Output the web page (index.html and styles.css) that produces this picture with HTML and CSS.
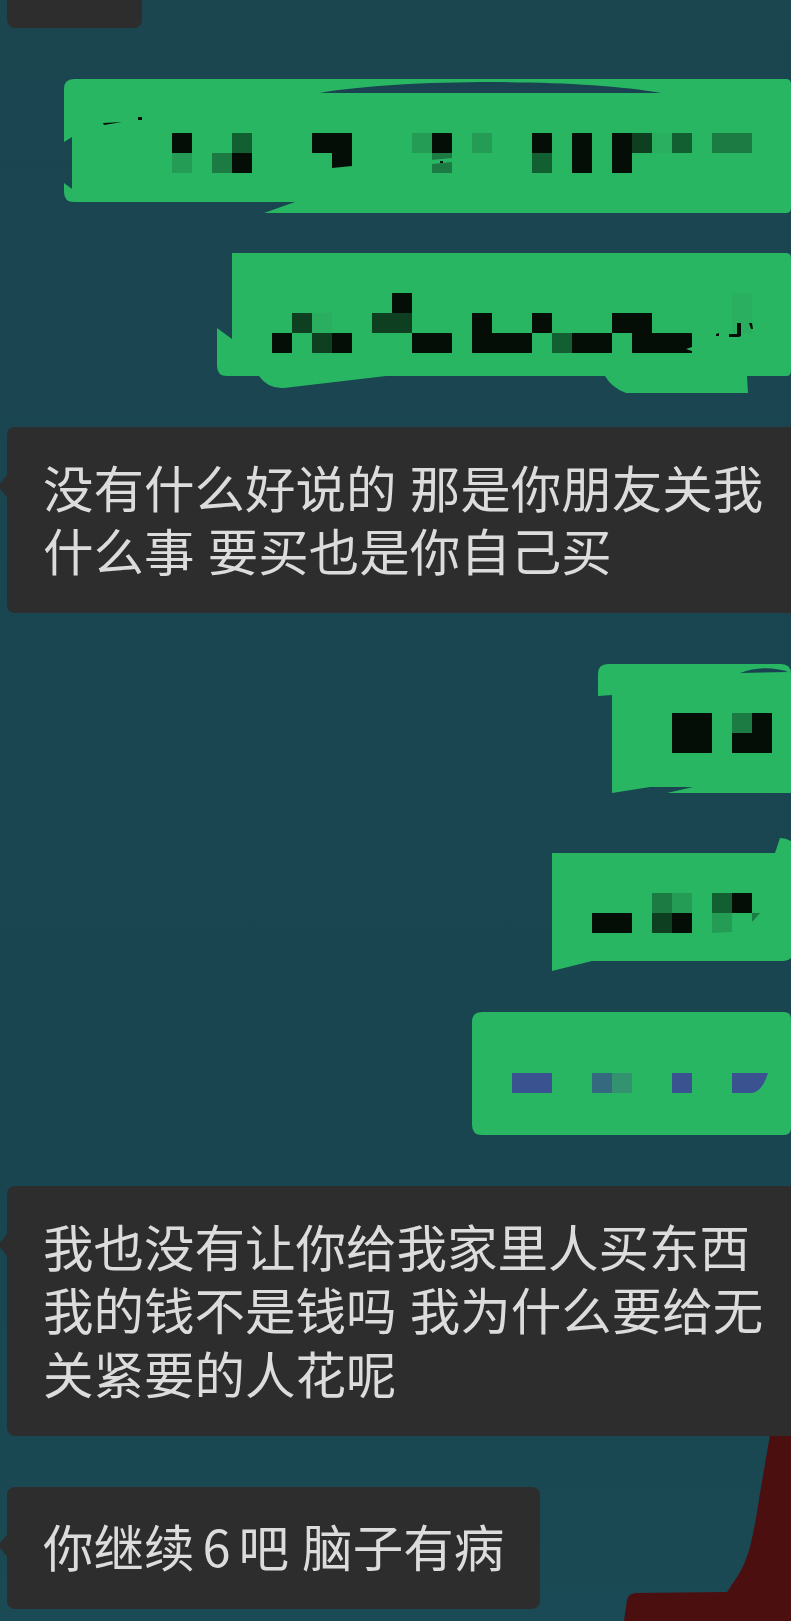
FILE: index.html
```html
<!DOCTYPE html>
<html lang="zh-CN">
<head>
<meta charset="utf-8">
<title>聊天记录</title>
<link rel="stylesheet" href="styles.css">
</head>
<body>
<main class="chat">
  <svg class="scribble" width="167" height="186" viewBox="624 1435 167 186" aria-hidden="true">
    <path class="red" d="M770 1435 L760 1493 Q755 1527 750 1547 Q745 1565 737 1577 L727 1592 L636 1593 Q628 1594 627 1600 L624 1621 H791 V1435 Z"/>
  </svg>

  <div class="bubble in stub"></div>

  <div class="row gap-l">
    <svg width="727" height="134" viewBox="64 79 727 134" role="img" aria-label="已打码消息">
      <path class="green" d="M74 79 H786 Q791 79 791 84 V208 Q791 213 786 213 H264 L295 202 H74 Q64 202 64 192 V183 L72 189 V137 L64 142 V89 Q64 79 74 79 Z"/>
      <path class="bg" d="M320 93 C400 79 580 78 661 93 Z"/>
      <path class="ink" d="M103 123 L122 122 L104 125 Z M138 117 h4 v3 h-4 Z"/>
      <path class="ink" d="M172 133 h20 v20 h-20 Z M232 153 h20 v20 h-20 Z M312 133 h40 v33 l-20 2 v-15 h-20 Z M432 133 h20 v20 h-20 Z M532 133 h20 v20 h-20 Z M572 133 h20 v40 h-20 Z M612 133 h20 v40 h-20 Z"/>
      <path class="deep" d="M632 133 h20 v20 h-20 Z"/>
      <path class="s1" d="M232 133 h20 v20 h-20 Z M672 133 h20 v20 h-20 Z M532 153 h20 v20 h-20 Z"/>
      <path class="s2" d="M212 153 h20 v20 h-20 Z M432 153 h20 v20 h-20 Z M712 133 h40 v20 h-40 Z"/>
      <path class="s3" d="M172 153 h20 v20 h-20 Z M412 133 h20 v20 h-20 Z M472 133 h20 v20 h-20 Z"/>
      <path class="s4" d="M652 133 h20 v20 h-20 Z"/>
      <path class="green" d="M420 161 L452 158 V162 L432 164 Z"/>
      <path class="ink" d="M440 161 h3 v2 h-3 Z"/>
    </svg>
  </div>

  <div class="row gap-m">
    <svg width="574" height="140" viewBox="217 253 574 140" role="img" aria-label="已打码消息">
      <path class="green" d="M232 253 H786 Q791 253 791 258 V371 Q791 376 786 376 H747 L748 393 H626 Q612 388 605 376 H386 L284 388 Q268 389 259 376 H227 Q217 376 217 366 V328 L232 339 Z"/>
      <path class="ink" d="M392 293 h20 v20 h-20 Z M472 313 h20 v40 h-20 Z M532 313 h20 v20 h-20 Z M612 313 h40 v20 h-40 Z M272 333 h20 v20 h-20 Z M332 333 h20 v20 h-20 Z M412 333 h40 v20 h-40 Z M492 333 h40 v20 h-40 Z M572 333 h40 v20 h-40 Z M632 333 h60 v14 l-6 2 l6 2 v2 h-60 Z"/>
      <path class="deep" d="M292 313 h20 v20 h-20 Z M372 313 h40 v20 h-40 Z M312 333 h20 v20 h-20 Z"/>
      <path class="s1" d="M552 333 h20 v20 h-20 Z"/>
      <path class="s4" d="M312 313 h20 v20 h-20 Z M732 293 h20 v40 h-20 Z"/>
      <path class="ink" d="M716 334 l3 -1 l0 3 l-3 0 Z M737 323 h4 v13 l-2 1 h-10 v-3 h8 Z M749 323 h3 l1 6 h-2 Z"/>
    </svg>
  </div>

  <p class="bubble in gap-s">没有什么好说的 那是你朋友关我什么事 要买也是你自己买</p>

  <div class="row gap-l">
    <svg width="193" height="129" viewBox="598 664 193 129" role="img" aria-label="已打码消息">
      <path class="green" d="M608 664 H781 Q791 664 791 674 V793 H667 L693 787 H650 L612 793 V695 L598 696 V674 Q598 664 608 664 Z"/>
      <path class="bg" d="M740 673 Q765 664 788 672 Z"/>
      <path class="ink" d="M672 713 h40 v40 h-40 Z M752 713 h20 v40 h-40 v-20 h20 Z"/>
      <path class="s2" d="M732 713 h20 v20 h-20 Z"/>
    </svg>
  </div>

  <div class="row gap-m2">
    <svg width="239" height="133" viewBox="552 838 239 133" role="img" aria-label="已打码消息">
      <path class="green" d="M552 853 H775 L780 838 Q786 838 791 841 V958 Q788 961 784 961 H592 L552 971 Z"/>
      <path class="ink" d="M592 913 h40 v20 h-40 Z M672 913 h20 v20 h-20 Z M732 893 h20 v20 h-20 Z"/>
      <path class="deep" d="M652 913 h20 v20 h-20 Z"/>
      <path class="s1" d="M712 893 h20 v20 h-20 Z"/>
      <path class="s2" d="M652 893 h20 v20 h-20 Z M752 913 h8 l-8 9 Z"/>
      <path class="s3" d="M672 893 h20 v20 h-20 Z M712 913 h20 v19 l-20 1 Z"/>
    </svg>
  </div>

  <div class="row gap-m3">
    <svg width="319" height="123" viewBox="472 1012 319 123" role="img" aria-label="已打码消息">
      <path class="green" d="M482 1012 H784 Q791 1012 791 1019 V1128 Q791 1135 784 1135 H482 Q472 1135 472 1125 V1022 Q472 1012 482 1012 Z"/>
      <path class="blue" d="M512 1073 h40 v20 h-40 Z M672 1073 h20 v20 h-20 Z M732 1073 H768 Q762 1092 752 1093 H732 Z"/>
      <path class="blue2" d="M592 1073 h20 v20 h-20 Z"/>
      <path class="blue3" d="M612 1073 h20 v20 h-20 Z"/>
    </svg>
  </div>

  <p class="bubble in gap-l">我也没有让你给我家里人买东西我的钱不是钱吗 我为什么要给无关紧要的人花呢</p>

  <p class="bubble in fit gap-l">你继续<span class="num">6</span>吧 脑子有病</p>
</main>
</body>
</html>
```

FILE: styles.css
```css
* {
  box-sizing: border-box;
}

html,
body {
  margin: 0;
  padding: 0;
}

body {
  width: 791px;
  height: 1621px;
  overflow: hidden;
  background: #19454f;
}

.chat {
  position: relative;
  display: flex;
  flex-direction: column;
  width: 791px;
  height: 1621px;
  padding-left: 7px;
  overflow: hidden;
  background: linear-gradient(180deg, #1b4650 0%, #1a4551 20%, #194650 45%, #18454f 70%, #1a4852 90%, #1a4a55 100%);
}

.scribble {
  position: absolute;
  right: 0;
  bottom: 0;
  display: block;
}

.row {
  position: relative;
  display: flex;
  justify-content: flex-end;
}

.row svg {
  display: block;
  flex: none;
}

.gap-s { margin-top: 34px; }
.gap-m { margin-top: 40px; }
.gap-m2 { margin-top: 45px; }
.gap-m3 { margin-top: 41px; }
.gap-l { margin-top: 51px; }

.bubble {
  position: relative;
  margin-bottom: 0;
  padding: 27.5px 13px 31.5px 36px;
  border-radius: 8px 0 0 8px;
  background: #2d2d2d;
  color: #dcdcdc;
  font-family: "Noto Sans CJK SC", "Noto Sans", sans-serif;
  font-size: 50.5px;
  font-weight: 400;
  line-height: 63.5px;
  word-spacing: 2px;
}

.bubble::before {
  content: "";
  position: absolute;
  top: 47px;
  left: -7px;
  width: 8px;
  height: 24px;
  background: #2d2d2d;
  clip-path: polygon(100% 0, 0 40%, 0 60%, 100% 100%);
}

.stub {
  flex: none;
  width: 135px;
  height: 28px;
  padding: 0;
  border-radius: 0 0 8px 8px;
}

.stub::before {
  display: none;
}

.fit {
  align-self: flex-start;
  padding-right: 36px;
  border-radius: 8px;
}

.num {
  margin: 0 8px;
}

.green { fill: #29b662; }
.bg { fill: #194350; }
.red { fill: #4b0f10; }
.ink { fill: #040e07; }
.deep { fill: #0e3f20; }
.s1 { fill: #125f31; }
.s2 { fill: #1c7a43; }
.s3 { fill: #249c56; }
.s4 { fill: #2aae5f; }
.blue { fill: #3b5290; }
.blue2 { fill: #35697f; }
.blue3 { fill: #339270; }
```
